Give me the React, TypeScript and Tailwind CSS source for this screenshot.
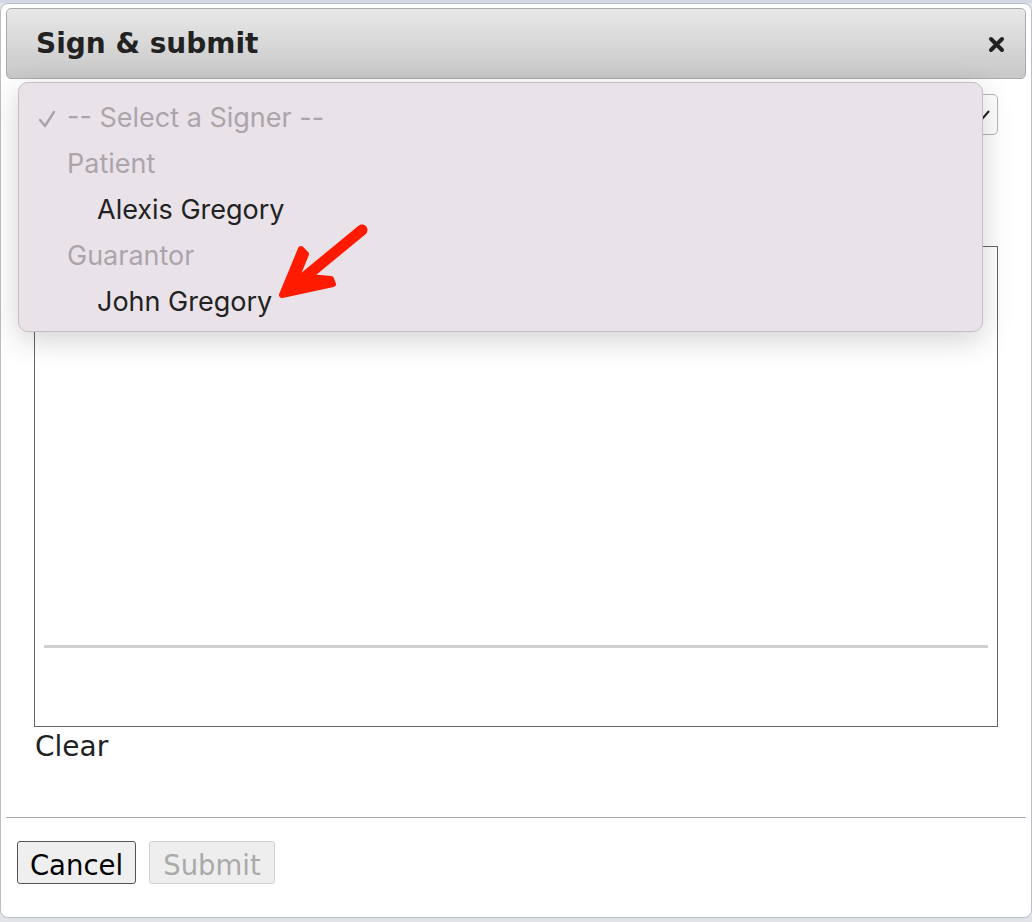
import React from "react";

const options = [
  { label: "-- Select a Signer --", kind: "selected" },
  { label: "Patient", kind: "group" },
  { label: "Alexis Gregory", kind: "item" },
  { label: "Guarantor", kind: "group" },
  { label: "John Gregory", kind: "item" },
];

function SignerMenu() {
  return (
    <div
      className="absolute left-[17px] top-[78px] w-[965px] h-[250px] rounded-[10px] border border-[#c4bfc4] bg-[#e9e3e9] shadow-[0_8px_30px_rgba(0,0,0,0.18)] pt-[12px]"
      style={{ fontFamily: "Inter, 'Liberation Sans', sans-serif" }}
    >
      {options.map((o) => (
        <div key={o.label} className="flex h-[46px] items-center text-[27px]">
          <span className="w-[48px] pl-[19px]">
            {o.kind === "selected" && (
              <svg width="18" height="18" viewBox="0 0 18 18" className="mt-[2px]">
                <path d="M2 10 L7 16 L16 2" stroke="#a9a3a9" strokeWidth="2.4" fill="none" strokeLinecap="round" strokeLinejoin="round" />
              </svg>
            )}
          </span>
          <span
            className={
              o.kind === "item"
                ? "pl-[30px] text-[#222]"
                : "text-[#aba5ab]"
            }
          >
            {o.label}
          </span>
        </div>
      ))}
    </div>
  );
}

function Arrow() {
  return (
    <svg className="absolute left-0 top-0 pointer-events-none" width="1032" height="922" viewBox="0 0 1032 922">
      <line x1="362" y1="230" x2="294" y2="286" stroke="#ff1a00" strokeWidth="11" strokeLinecap="round" />
      <path d="M282 295 L301 249 L306 254 L297 276 L331 279 L333 284 Z" fill="#ff1a00" stroke="#ff1a00" strokeWidth="6" strokeLinejoin="round" />
    </svg>
  );
}

export default function App() {
  return (
    <div className="relative h-[922px] w-[1032px] overflow-hidden bg-[#e1e3e6]">
      <div className="h-[3px] bg-[#d3dae3]" />
      <div className="relative h-[915px] rounded-[8px] border border-[#b7c0ca] bg-white px-[5px] pt-[4px]">
        <div className="flex h-[71px] items-center justify-between rounded-[5px] border border-[#aaa] bg-gradient-to-b from-[#e8e8e8] to-[#c8c8c8] pl-[29px] pr-[20px]">
          <h2
            className="text-[28px] font-bold text-[#222]"
            style={{ fontFamily: "'DejaVu Sans', Verdana, sans-serif" }}
          >
            Sign &amp; submit
          </h2>
          <svg width="17" height="17" viewBox="0 0 17 17" className="mt-[2px]">
            <path d="M3 3 L14 14 M14 3 L3 14" stroke="#222" strokeWidth="4" strokeLinecap="round" />
          </svg>
        </div>

        <div className="px-[28px]" style={{ fontFamily: "'DejaVu Sans', Verdana, sans-serif" }}>
          <div className="relative mt-[15px] h-[41px] rounded-[5px] border border-[#b5b5b5] bg-white">
            <svg className="absolute right-[6px] top-[14px]" width="16" height="12" viewBox="0 0 16 12">
              <path d="M2 2 L8 9 L14 2" stroke="#222" strokeWidth="2" fill="none" />
            </svg>
          </div>

          <div className="mt-[111px] h-[481px] border border-[#666] px-[9px] pt-[398px]">
            <div className="h-[3px] bg-[#d0d0d0]" />
          </div>
          <div className="mt-[4px] pl-[1px] text-[28px] leading-[32px] text-[#222]">Clear</div>
        </div>

        <div className="mt-[54px] border-t border-[#aaa]" />
        <div className="flex gap-[13px] pl-[11px] pt-[23px]" style={{ fontFamily: "'DejaVu Sans', Verdana, sans-serif" }}>
          <button className="h-[43px] w-[119px] rounded-[3px] border border-[#555] bg-[#efefef] pt-[3px] text-[27.5px] text-black">
            Cancel
          </button>
          <button disabled className="h-[43px] w-[126px] rounded-[3px] border border-[#d0d0d0] bg-[#eeeeee] pt-[3px] text-[27.5px] text-[#aaa]">
            Submit
          </button>
        </div>

        <SignerMenu />
      </div>
      <Arrow />
    </div>
  );
}
